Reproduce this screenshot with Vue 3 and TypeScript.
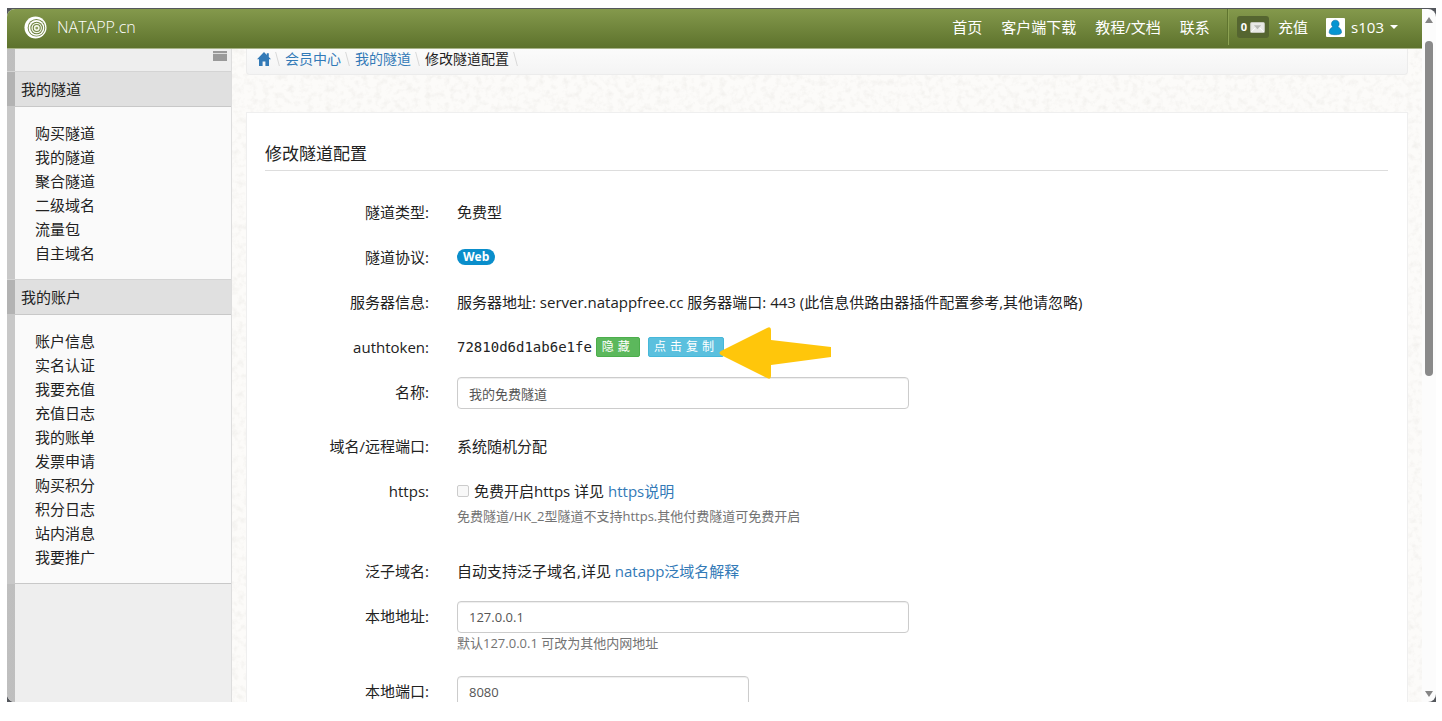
<script setup lang="ts">
import { ref } from 'vue'

interface Group {
  title: string
  items: string[]
}

const nav: string[] = ['首页', '客户端下载', '教程/文档', '联系']
const groups: Group[] = [
  { title: '我的隧道', items: ['购买隧道', '我的隧道', '聚合隧道', '二级域名', '流量包', '自主域名'] },
  {
    title: '我的账户',
    items: ['账户信息', '实名认证', '我要充值', '充值日志', '我的账单', '发票申请', '购买积分', '积分日志', '站内消息', '我要推广'],
  },
]
const tunnelName = ref<string>('我的免费隧道')
const localAddress = ref<string>('127.0.0.1')
const localPort = ref<string>('8080')
const https = ref<boolean>(false)
</script>

<template>
  <div class="desktop">
    <div class="frame">
      <div class="window">
        <div class="page">
          <header class="navbar">
            <a class="brand" href="#">
              <svg class="logo" viewBox="0 0 24 24" aria-hidden="true">
                <circle cx="12" cy="12" r="11.500" fill="#fff" />
                <circle cx="13" cy="12.300" r="9.200" fill="#6f8340" />
                <circle cx="13" cy="12.400" r="8.200" fill="#fff" />
                <circle cx="13.200" cy="12.500" r="6.600" fill="#6f8340" />
                <circle cx="13.200" cy="12.600" r="5.500" fill="#f4f7ea" />
                <circle cx="13.300" cy="12.600" r="4.200" fill="#6f8340" />
                <circle cx="13.300" cy="12.600" r="3.100" fill="#f4f7ea" />
                <circle cx="13.300" cy="12.600" r="1.500" fill="#8fa060" />
              </svg>
              <span>NATAPP.cn</span>
            </a>
            <nav class="links">
              <a v-for="n in nav" :key="n" href="#">{{ n }}</a>
            </nav>
            <div class="account">
              <a class="mail" href="#" aria-label="站内消息">
                <b>0</b>
                <svg viewBox="0 0 16 12" aria-hidden="true">
                  <rect x="0.5" y="0.5" width="15" height="11" rx="1" fill="#e9e9e6" stroke="#c9cbc2" />
                  <path d="M1 11 6 6M15 11 10 6" stroke="#fff" fill="none" />
                  <path d="M4 3.5h8L8 8z" fill="#b9bab6" />
                </svg>
              </a>
              <a class="recharge" href="#">充值</a>
              <button class="user" type="button">
                <svg class="avatar" viewBox="0 0 19 19" aria-hidden="true">
                  <rect width="19" height="19" rx="1" fill="#fff" />
                  <path d="M9.3 2.2c2.3 0 3.8 1.6 3.8 3.7 0 1.4-.7 2.4-1.4 3.2 2.4.6 3.8 2.6 3.8 5.4 0 1.5-3 2.2-6.2 2.2s-6.1-.7-6.1-2.2c0-2.800 1.400-4.800 3.800-5.400C6.200 8.300 5.500 7.300 5.500 5.900 5.500 3.800 7 2.200 9.300 2.200z" fill="#0695d2" stroke="#0b6c9c" stroke-width="0.600" />
                </svg>
                <span>s103</span>
                <i class="caret"></i>
              </button>
            </div>
          </header>

          <div class="body">
            <aside class="sidebar">
              <div class="tools">
                <button class="toggle" type="button" aria-label="收起菜单"></button>
              </div>
              <section v-for="g in groups" :key="g.title">
                <h2>{{ g.title }}</h2>
                <ul>
                  <li v-for="i in g.items" :key="i"><a href="#">{{ i }}</a></li>
                </ul>
              </section>
            </aside>

            <main class="main">
              <svg class="paper" aria-hidden="true">
                <filter id="fibre" x="0" y="0" width="100%" height="100%">
                  <feTurbulence type="fractalNoise" baseFrequency="0.16" numOctaves="4" seed="8" />
                  <feColorMatrix values="0 0 0 0 0.6  0 0 0 0 0.58  0 0 0 0 0.54  0.45 0 0 0 -0.2" />
                </filter>
                <rect width="100%" height="100%" filter="url(#fibre)" />
              </svg>
              <ol class="crumbs">
                <li>
                  <a href="#" aria-label="首页">
                    <svg class="home" viewBox="0 0 14 14" aria-hidden="true">
                      <path d="M7 0 0 7.300h2V14h3.600V9.500h2.800V14H12V7.300h2L11.800 5V1.200H9.800V3z" fill="#337ab7" />
                    </svg>
                  </a>
                </li>
                <li><a href="#">会员中心</a></li>
                <li><a href="#">我的隧道</a></li>
                <li>修改隧道配置</li>
              </ol>

              <form class="panel" @submit.prevent>
                <h1>修改隧道配置</h1>
                <div class="row">
                  <span class="label">隧道类型:</span>
                  <div>免费型</div>
                </div>
                <div class="row">
                  <span class="label">隧道协议:</span>
                  <div class="inline"><span class="pill">Web</span></div>
                </div>
                <div class="row">
                  <span class="label">服务器信息:</span>
                  <div>服务器地址: server.natappfree.cc 服务器端口: 443 (此信息供路由器插件配置参考,其他请忽略)</div>
                </div>
                <div class="row">
                  <span class="label">authtoken:</span>
                  <div class="inline">
                    <code>72810d6d1ab6e1fe</code>
                    <button class="mini hide" type="button">隐藏</button>
                    <span class="pointed">
                      <button class="mini copy" type="button">点击复制</button>
                      <svg class="arrow" viewBox="0 0 112 54" aria-hidden="true">
                        <path d="M2 25 48 2Q52 0 52 4V14L112 21V31L52 39V50Q52 54 48 52L2 29Q-1 27 2 25z" fill="#ffc60b" />
                      </svg>
                    </span>
                  </div>
                </div>
                <div class="row after-input">
                  <label class="label" for="name">名称:</label>
                  <div><input id="name" v-model="tunnelName" class="text" type="text" /></div>
                </div>
                <div class="row">
                  <span class="label">域名/远程端口:</span>
                  <div>系统随机分配</div>
                </div>
                <div class="row after-help">
                  <span class="label">https:</span>
                  <div>
                    <div class="check">
                      <input id="https" v-model="https" type="checkbox" />
                      <label for="https">免费开启https 详见 <a href="#">https说明</a></label>
                    </div>
                    <p class="help">免费隧道/HK_2型隧道不支持https.其他付费隧道可免费开启</p>
                  </div>
                </div>
                <div class="row">
                  <span class="label">泛子域名:</span>
                  <div>自动支持泛子域名,详见 <a href="#">natapp泛域名解释</a></div>
                </div>
                <div class="row after-input">
                  <label class="label" for="addr">本地地址:</label>
                  <div>
                    <input id="addr" v-model="localAddress" class="text" type="text" />
                    <p class="help">默认127.0.0.1 可改为其他内网地址</p>
                  </div>
                </div>
                <div class="row">
                  <label class="label" for="port">本地端口:</label>
                  <div><input id="port" v-model="localPort" class="text short" type="text" /></div>
                </div>
              </form>
            </main>
          </div>
        </div>

        <div class="scroll" aria-hidden="true">
          <i class="up"></i>
          <div class="track"><div class="thumb"></div></div>
          <i class="down"></i>
        </div>
      </div>
    </div>
  </div>
</template>

<style>
body {
  margin: 0;
  background: #fff;
}
</style>

<style scoped>
* {
  box-sizing: border-box;
}
.desktop {
  height: 100vh;
  padding: 8px 6px 19px 7px;
  overflow: hidden;
  font-family: "Open Sans", "Noto Sans CJK SC", sans-serif;
  font-size: 15px;
  line-height: 30px;
  color: #222;
}
.frame {
  height: 100%;
  padding-top: 1px;
  background: #54575c;
}
.window {
  display: flex;
  height: 100%;
  border-radius: 8px;
  overflow: hidden;
  background: #fcfcfc;
}
a {
  color: #337ab7;
  text-decoration: none;
}
button {
  font: inherit;
  border: 0;
  padding: 0;
  cursor: pointer;
}
h1,
h2,
ul,
ol,
p {
  margin: 0;
  padding: 0;
  font-weight: 400;
  list-style: none;
}
.page {
  flex: 1;
  min-width: 0;
  display: flex;
  flex-direction: column;
}

.navbar {
  flex: none;
  display: flex;
  align-items: center;
  height: 40px;
  padding: 0 24px 3px 17px;
  background: linear-gradient(#84994c, #5d722c);
  border-bottom: 1px solid #a8b388;
}
.navbar a,
.user {
  color: #fff;
}
.brand {
  display: flex;
  align-items: center;
  gap: 10px;
  margin-right: auto;
  font-size: 16px;
  font-weight: 300;
}
.logo {
  width: 23px;
  height: 23px;
}
.links {
  display: flex;
  gap: 19px;
  padding-right: 18px;
}
.account {
  display: flex;
  align-items: center;
  align-self: stretch;
  padding-left: 8px;
  border-left: 1px solid #8ca252;
  box-shadow: -1px 0 #5f742f;
}
.mail {
  display: flex;
  align-items: center;
  gap: 3px;
  height: 22px;
  padding: 0 4px;
  border-radius: 3px;
  background: #556530;
  font-size: 11px;
}
.mail svg {
  width: 15px;
  height: 11px;
}
.recharge {
  margin: 0 18px 0 9px;
}
.user {
  display: flex;
  align-items: center;
  gap: 6px;
  background: none;
}
.avatar {
  width: 19px;
  height: 19px;
}
.caret {
  border: 4px solid transparent;
  border-top-color: #fff;
  border-bottom: 0;
}

.body {
  flex: 1;
  min-height: 0;
  display: flex;
}
.sidebar {
  flex: none;
  width: 225px;
  overflow: hidden;
  background: linear-gradient(90deg, rgba(0, 0, 0, 0.2) 8px, transparent 8px), #eee;
  border-right: 1px solid #ddd;
}
.tools {
  display: flex;
  justify-content: flex-end;
  height: 22px;
  padding: 2px 4px;
}
.toggle {
  width: 14px;
  height: 10px;
  background: linear-gradient(#999 2px, #ddd 2px, #ddd 3px, #999 3px);
}
.sidebar h2 {
  height: 36px;
  padding-left: 14px;
  border-top: 1px solid #d4d4d4;
  border-bottom: 1px solid #c8c8c8;
  background: linear-gradient(90deg, #b3b3b3 8px, #e0e0e0 8px);
  font-size: 15px;
  line-height: 34px;
}
.sidebar ul {
  padding: 14px 0 14px 28px;
  background: linear-gradient(90deg, #c8c8c8 8px, #fafafa 8px);
  line-height: 24px;
}
.sidebar section:last-child ul {
  border-bottom: 1px solid #c8c8c8;
}
.sidebar li a {
  color: #222;
}

.main {
  position: relative;
  flex: 1;
  min-width: 0;
  display: flex;
  flex-direction: column;
  padding: 0 14px;
  overflow: hidden;
  background: #fcfbf9;
}
.paper {
  position: absolute;
  inset: 0;
  width: 100%;
  height: 100%;
}
.crumbs {
  position: relative;
  flex: none;
  display: flex;
  align-items: center;
  height: 26px;
  padding: 0 10px 5px;
  border: 1px solid #ececec;
  border-top: 0;
  border-radius: 0 0 4px 4px;
  background: linear-gradient(#fbfbfb, #f4f4f4);
  font-size: 14px;
  line-height: 20px;
}
.crumbs li {
  display: flex;
  align-items: center;
}
.crumbs li::after {
  content: "";
  width: 1px;
  height: 14px;
  margin: 0 7px 0 6px;
  background: #d8d8d8;
  transform: skewX(15deg);
}
.home {
  display: block;
  width: 14px;
  height: 14px;
}
.panel {
  position: relative;
  flex: 1 0 auto;
  margin-top: 37px;
  padding: 25px 19px 0 18px;
  border: 1px solid #efefef;
  background: #fff;
}
h1 {
  margin-bottom: 26px;
  border-bottom: 1px solid #ddd;
  font-size: 17px;
  line-height: 32px;
}
.row {
  display: grid;
  grid-template-columns: 164px 1fr;
  column-gap: 28px;
  margin-bottom: 15px;
}
.row.after-input {
  margin-bottom: 22px;
}
.row.after-help {
  margin-bottom: 29px;
}
.label {
  text-align: right;
}
.inline {
  display: flex;
  align-items: center;
}
.pill {
  padding: 0 6px;
  border-radius: 8px;
  background: #0a8ecb;
  color: #fff;
  font-size: 12px;
  font-weight: 700;
  line-height: 16px;
}
code {
  margin-right: 4px;
  font-family: "DejaVu Sans Mono", monospace;
  font-size: 14px;
}
.mini {
  display: block;
  height: 20px;
  padding: 0 5px;
  border: 1px solid #4cae4c;
  border-radius: 2px;
  background: #5cb85c;
  color: #fff;
  font-size: 12px;
  line-height: 18px;
  letter-spacing: 4px;
  white-space: nowrap;
}
.pointed {
  position: relative;
  margin-left: 8px;
}
.mini.copy {
  border-color: #46b8da;
  background: #5bc0de;
}
.arrow {
  position: absolute;
  left: calc(100% - 5px);
  top: -11px;
  width: 112px;
  height: 54px;
}
.text {
  display: block;
  width: 100%;
  max-width: 452px;
  height: 32px;
  padding: 0 11px;
  border: 1px solid #ccc;
  border-radius: 4px;
  background: #fff;
  box-shadow: inset 0 1px 1px rgba(0, 0, 0, 0.07);
  color: #555;
  font: 13px "Open Sans", "Noto Sans CJK SC", sans-serif;
}
.short {
  max-width: 292px;
}
.check {
  display: flex;
  align-items: center;
  gap: 5px;
}
.check input {
  appearance: none;
  width: 12px;
  height: 12px;
  margin: 0;
  border: 1px solid #ccc;
  border-radius: 2px;
  background: #f8f8f8;
}
.help {
  color: #737373;
  font-size: 13px;
  line-height: 21px;
}

.scroll {
  flex: none;
  display: flex;
  flex-direction: column;
  align-items: center;
  width: 14px;
  padding: 8px 0 5px;
}
.up,
.down {
  border: 4px solid transparent;
}
.up {
  border-top: 0;
  border-bottom: 6px solid #858585;
}
.down {
  border-bottom: 0;
  border-top: 6px solid #858585;
}
.track {
  flex: 1;
  width: 8px;
  padding: 18px 0;
}
.thumb {
  height: 53%;
  border-radius: 4px;
  background: #8a8a8a;
}
</style>
